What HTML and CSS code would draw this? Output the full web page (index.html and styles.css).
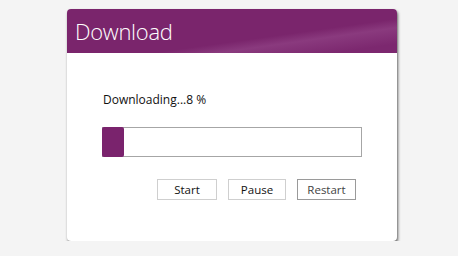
FILE: index.html
```html
<!DOCTYPE html>
<html>
<head>
<meta charset="utf-8">
<link rel="stylesheet" href="styles.css">
</head>
<body>
<div class="card">
  <div class="header"><span class="title">Download</span></div>
  <div class="content">
    <div class="status">Downloading...8 %</div>
    <div class="bar"><div class="fill" style="width:8.5%"></div></div>
    <div class="buttons">
      <button class="btn btn-start">Start</button>
      <button class="btn btn-pause">Pause</button>
      <button class="btn btn-alt">Restart</button>
    </div>
  </div>
</div>
</body>
</html>
```

FILE: styles.css
```css
html, body {
  margin: 0;
  padding: 0;
  background: #f4f4f4;
  font-family: "Open Sans", "Noto Sans", sans-serif;
}
body {
  padding: 9px 0 0 67px;
}
.card {
  width: 330px;
  height: 232px;
  background: #ffffff;
  border-radius: 4px;
  box-shadow: 1px 2px 3px rgba(0,0,0,0.6);
  overflow: hidden;
  box-sizing: border-box;
}
.header {
  height: 44px;
  background: linear-gradient(172deg, #7a256c 0%, #7a256c 62%, #8a3a7e 72%, #7c286f 90%);
  display: flex;
  align-items: center;
  padding-left: 8px;
}
.title {
  color: #ffffff;
  font-size: 22px;
  font-weight: 300;
  letter-spacing: -0.3px;
  line-height: 1;
}
.content {
  padding: 38px 0 0 35px;
}
.status {
  font-size: 12px;
  color: #111;
  line-height: 17px;
  padding-left: 1px;
}
.bar {
  margin-top: 19px;
  width: 260px;
  height: 30px;
  border: 1px solid #a6a6a6;
  box-sizing: border-box;
  background: #fff;
  position: relative;
}
.fill {
  height: calc(100% + 2px);
  margin: -1px 0 0 -1px;
  background: #7a236d;
  border-radius: 2px;
}
.buttons {
  display: flex;
  gap: 11px;
  margin-top: 22px;
  padding-left: 55px;
}
.btn {
  width: 60px;
  height: 21px;
  font-family: "Open Sans", "Noto Sans", sans-serif;
  font-size: 11.5px;
  color: #111;
  background: #fff;
  border: 1px solid #cfcfcf;
  padding: 0;
  margin: 0;
}
.btn-pause {
  width: 58px;
}
.btn-alt {
  width: 59px;
  border-color: #9a9a9a;
  color: #444;
}
```
